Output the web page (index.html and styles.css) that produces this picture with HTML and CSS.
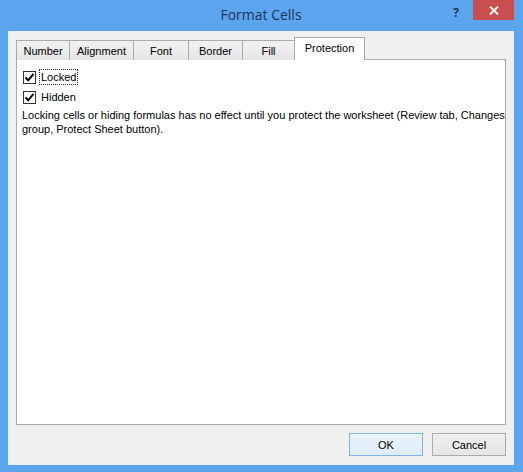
FILE: index.html
```html
<!DOCTYPE html>
<html lang="en">
<head>
    <meta charset="UTF-8">
    <title>Format Cells</title>
    <link rel="stylesheet" href="styles.css">
</head>
<body>
    <div class="window">
        <div class="titlebar">
            <span class="title">Format Cells</span>
            <span class="help">?</span>
            <span class="close">
                <svg width="10" height="9" viewBox="0 0 10 9">
                    <path d="M1 0.5 L9 8.5 M9 0.5 L1 8.5" stroke="#fff" stroke-width="1.8"/>
                </svg>
            </span>
        </div>

        <div class="client">
            <div class="tabs">
                <div class="tab tab-number">Number</div>
                <div class="tab tab-alignment">Alignment</div>
                <div class="tab tab-font">Font</div>
                <div class="tab tab-border">Border</div>
                <div class="tab tab-fill">Fill</div>
                <div class="tab tab-protection active">Protection</div>
            </div>

            <div class="panel">
                <label class="check">
                    <span class="box">
                        <svg width="11" height="11" viewBox="0 0 11 11">
                            <path d="M1.5 5.5 L4.2 8.3 L9.5 1.8" fill="none" stroke="#000" stroke-width="2"/>
                        </svg>
                    </span>
                    <span class="label focused">Locked</span>
                </label>
                <label class="check">
                    <span class="box">
                        <svg width="11" height="11" viewBox="0 0 11 11">
                            <path d="M1.5 5.5 L4.2 8.3 L9.5 1.8" fill="none" stroke="#000" stroke-width="2"/>
                        </svg>
                    </span>
                    <span class="label">Hidden</span>
                </label>
                <p class="note">Locking cells or hiding formulas has no effect until you protect the worksheet (Review tab, Changes group, Protect Sheet button).</p>
            </div>

            <div class="buttons">
                <button class="btn btn-default">OK</button>
                <button class="btn">Cancel</button>
            </div>
        </div>
    </div>
</body>
</html>
```

FILE: styles.css
```css
body {
    margin: 0;
    font-family: "Liberation Sans", Arial, sans-serif;
    font-size: 11px;
    color: #000;
}

.window {
    width: 523px;
    height: 472px;
    background: #5ba4ee;
    display: flex;
    flex-direction: column;
    padding: 0 9px 7px 8px;
    box-sizing: border-box;
}

.titlebar {
    height: 31px;
    flex-shrink: 0;
    position: relative;
    display: flex;
    justify-content: center;
    align-items: center;
}

.title {
    font-family: "Open Sans", sans-serif;
    font-size: 14px;
    color: #1b3556;
    margin-top: -2px;
}

.help {
    position: absolute;
    right: 55px;
    top: 4px;
    font-family: "Open Sans", sans-serif;
    font-weight: bold;
    font-size: 12px;
    color: #1b3556;
}

.close {
    position: absolute;
    right: 0;
    top: 0;
    width: 41px;
    height: 20px;
    background: #c94f4f;
    display: flex;
    justify-content: center;
    align-items: center;
}

.client {
    flex: 1;
    background: #f0f0f0;
    display: flex;
    flex-direction: column;
    padding: 7px 8px 9px 8px;
}

.tabs {
    display: flex;
    align-items: flex-end;
    height: 22px;
    position: relative;
    z-index: 1;
    margin-bottom: -1px;
}

.tab {
    height: 20px;
    box-sizing: border-box;
    border: 1px solid #acacac;
    border-bottom: none;
    border-right: none;
    background: linear-gradient(#f2f2f2, #e6e6e6);
    display: flex;
    justify-content: center;
    align-items: center;
    padding-top: 1px;
}

.tab-number { width: 53px; }
.tab-alignment { width: 64px; }
.tab-font { width: 55px; }
.tab-border { width: 54px; }
.tab-fill { width: 52px; }

.tab-protection {
    width: 71px;
    height: 23px;
    background: #fff;
    border-right: 1px solid #acacac;
    padding-top: 0;
    padding-bottom: 2px;
}

.panel {
    flex: 1;
    background: #fff;
    border: 1px solid #acacac;
    padding: 7px 0 7px 5px;
}

.check {
    display: flex;
    align-items: center;
    height: 20px;
    padding-left: 1px;
}

.box {
    width: 11px;
    height: 11px;
    border: 1px solid #333;
    background: #fff;
    margin-right: 3px;
    display: flex;
}

.label {
    padding: 1px 1px;
    border: 1px solid transparent;
}

.label.focused {
    border: 1px dotted #333;
}

.note {
    margin: 1px 0 0 0;
    line-height: 14px;
}

.buttons {
    display: flex;
    justify-content: flex-end;
    gap: 9px;
    margin-top: 8px;
}

.btn {
    width: 74px;
    height: 23px;
    font-family: "Liberation Sans", Arial, sans-serif;
    font-size: 11px;
    color: #000;
    background: linear-gradient(#f0f0f0, #e5e5e5);
    border: 1px solid #acacac;
    padding: 0;
}

.btn-default {
    background: linear-gradient(#ecf4fc, #dcecfc);
    border-color: #7eb4ea;
}
```
